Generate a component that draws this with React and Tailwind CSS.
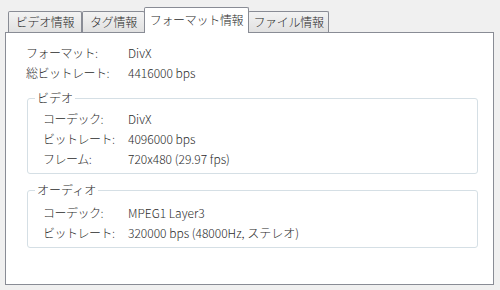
import React from "react";

const font = { fontFamily: '"Noto Sans CJK JP", "Noto Sans", sans-serif' };

function Tab({ label, active, w }) {
  if (active) {
    return (
      <div
        className={`${w} h-[26px] -mx-[1px] -mb-px relative z-10 bg-white border border-b-0 border-[#898c95] rounded-t-[2px] flex items-center justify-center text-[12px] leading-none text-[#2b2b2b] font-light tracking-[-0.3px]`}
      >
        <span className="-mt-[2px]">{label}</span>
      </div>
    );
  }
  return (
    <div
      className={`${w} h-[21px] bg-gradient-to-b from-[#f3f3f3] to-[#e1e1e1] border border-b-0 border-[#898c95] rounded-t-[2px] flex items-center justify-center text-[12px] leading-none text-[#2b2b2b] font-light tracking-[-0.3px]`}
    >
      <span>{label}</span>
    </div>
  );
}

function Row({ label, value, lw }) {
  return (
    <div className="flex h-[20px] items-center text-[12px] leading-none text-[#2b2b2b] font-light">
      <div className={`${lw} tracking-[-0.5px]`}>{label}</div>
      <div>{value}</div>
    </div>
  );
}

function Group({ title, children, pt }) {
  return (
    <fieldset className="ml-[21px] w-[451px] border border-[#d5dfe5] rounded-[3px] pb-[4px]">
      <legend className="ml-[7px] px-[2px] text-[12px] leading-[14px] text-[#2b2b2b] font-light">{title}</legend>
      <div className={`${pt} pl-[15px]`}>{children}</div>
    </fieldset>
  );
}

export default function App() {
  return (
    <div className="w-[500px] h-[290px] bg-[#f0f0f0] pt-[7px] px-[5px]" style={font}>
      <div className="flex items-end pl-[3px] h-[25px]">
        <Tab label="ビデオ情報" w="w-[74px]" />
        <Tab label="タグ情報" w="w-[63px]" />
        <Tab label="フォーマット情報" w="w-[105px]" active />
        <Tab label="ファイル情報" w="w-[81px]" />
      </div>
      <div className="h-[253px] w-[489px] border border-[#898c95] bg-white pt-[10px]">
        <div className="pl-[20px]">
          <Row label="フォーマット:" value="DivX" lw="w-[102px]" />
          <Row label="総ビットレート:" value="4416000 bps" lw="w-[102px]" />
        </div>
        <div className="mt-[8px]">
          <Group title="ビデオ" pt="pt-[4px]">
            <Row label="コーデック:" value="DivX" lw="w-[85px]" />
            <Row label="ビットレート:" value="4096000 bps" lw="w-[85px]" />
            <Row label="フレーム:" value="720x480 (29.97 fps)" lw="w-[85px]" />
          </Group>
        </div>
        <div className="mt-[9px]">
          <Group title="オーディオ" pt="pt-[6px]">
            <Row label="コーデック:" value="MPEG1 Layer3" lw="w-[85px]" />
            <Row label="ビットレート:" value="320000 bps (48000Hz, ステレオ)" lw="w-[85px]" />
          </Group>
        </div>
      </div>
    </div>
  );
}
